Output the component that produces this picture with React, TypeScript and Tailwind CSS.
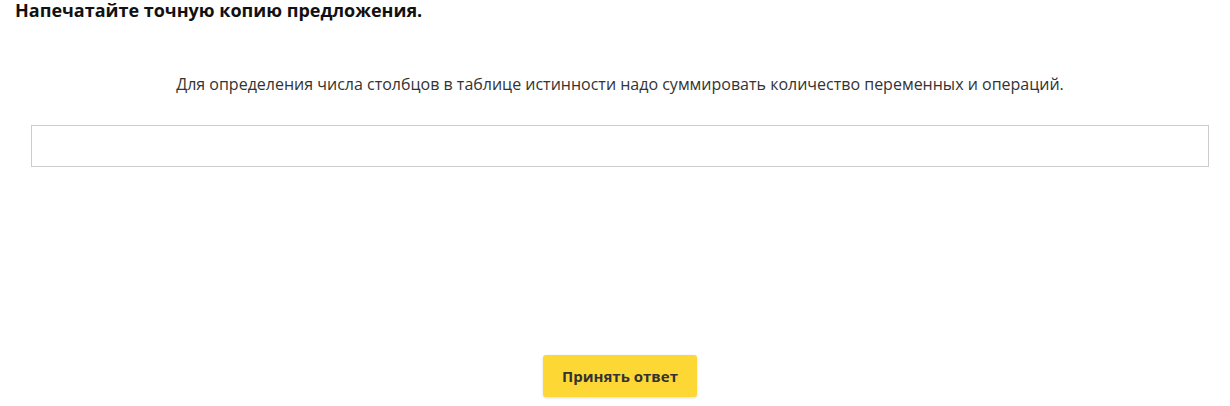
import React from 'react';

const App: React.FC = () => {
  return (
    <div className="w-[1230px] h-[406px] bg-white font-['Open_Sans',sans-serif] text-[#222]">
      <h1 className="pl-[15px] text-[18px] leading-[20px] font-bold text-[#111]">
        Напечатайте точную копию предложения.
      </h1>
      <div className="pl-[31px] pr-[21px]">
        <p className="mt-[53px] text-center text-[16px] leading-[22px] text-[#333]">
          Для определения числа столбцов в таблице истинности надо суммировать количество переменных и операций.
        </p>
        <input
          type="text"
          className="mt-[30px] block w-full h-[42px] border border-[#cccccc] bg-white px-3 text-[16px] outline-none"
        />
        <div className="flex justify-center mt-[188px]">
          <button className="w-[154px] h-[42px] rounded-[3px] bg-[#fdd835] text-[15px] font-bold text-[#333] shadow-[0_1px_3px_rgba(0,0,0,0.15)]">
            Принять ответ
          </button>
        </div>
      </div>
    </div>
  );
};

export default App;
